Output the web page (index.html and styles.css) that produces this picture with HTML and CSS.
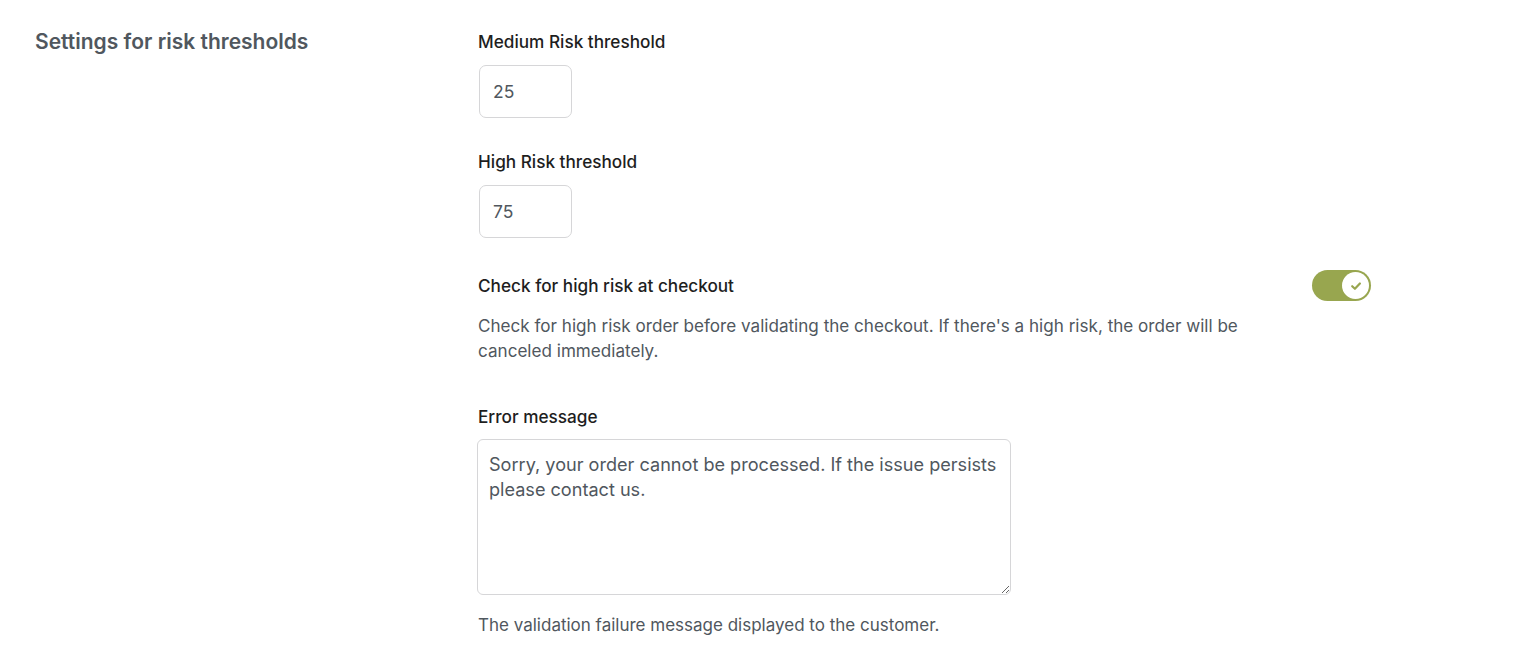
FILE: index.html
```html
<!DOCTYPE html>
<html lang="en">
<head>
<meta charset="utf-8">
<title>Settings for risk thresholds</title>
<link rel="stylesheet" href="styles.css">
</head>
<body>
<div class="section">
  <div class="section-title">
    <h2>Settings for risk thresholds</h2>
  </div>
  <div class="section-body">
    <div class="field">
      <label class="field-label" for="medium">Medium Risk threshold</label>
      <input class="num-input" id="medium" type="text" value="25">
    </div>
    <div class="field field-gap">
      <label class="field-label" for="high">High Risk threshold</label>
      <input class="num-input" id="high" type="text" value="75">
    </div>
    <div class="field toggle-field">
      <div class="toggle-row">
        <span class="field-label">Check for high risk at checkout</span>
        <span class="toggle">
          <span class="knob">
            <svg width="14" height="14" viewBox="0 0 14 14"><path d="M3.2 7.2 L5.9 9.8 L10.9 4.5" fill="none" stroke="#98a64f" stroke-width="2.2" stroke-linecap="round" stroke-linejoin="round"/></svg>
          </span>
        </span>
      </div>
      <p class="desc">Check for high risk order before validating the checkout. If there's a high risk, the order will be canceled immediately.</p>
    </div>
    <div class="field error-field">
      <label class="field-label" for="msg">Error message</label>
      <textarea class="msg-input" id="msg">Sorry, your order cannot be processed. If the issue persists please contact us.</textarea>
      <p class="help">The validation failure message displayed to the customer.</p>
    </div>
  </div>
</div>
</body>
</html>
```
FILE: styles.css
```css
html, body {
  margin: 0;
  padding: 0;
  background: #ffffff;
}
body {
  font-family: Inter, "Noto Sans", "Liberation Sans", sans-serif;
  color: #1e1e1e;
}
.section {
  display: flex;
  padding: 30px 0 0 35px;
}
.section-title {
  width: 443px;
  flex: none;
}
.section-title h2 {
  margin: 0;
  font-size: 21px;
  line-height: 24px;
  font-weight: 600;
  color: #50575e;
}
.section-body {
  width: 893px;
  display: flex;
  flex-direction: column;
}
.field {
  display: flex;
  flex-direction: column;
  align-items: flex-start;
}
.field-gap {
  margin-top: 32px;
}
.field-label {
  font-size: 17.2px;
  line-height: 24px;
  font-weight: 500;
  color: #1e1e1e;
}
.num-input {
  margin: 11px 0 0 1px;
  box-sizing: border-box;
  width: 93px;
  height: 53px;
  border: 1px solid #d6d6d8;
  border-radius: 7px;
  padding: 0 13px;
  font-family: inherit;
  font-size: 17.5px;
  color: #50575e;
  background: #fff;
  outline: none;
}
.toggle-field {
  margin-top: 32px;
  align-items: stretch;
}
.toggle-row {
  display: flex;
  align-items: center;
  justify-content: space-between;
}
.toggle {
  width: 59px;
  height: 31px;
  border-radius: 16px;
  background: #98a64f;
  display: flex;
  align-items: center;
  justify-content: flex-end;
  padding-right: 2px;
  box-sizing: border-box;
}
.knob {
  width: 27px;
  height: 27px;
  border-radius: 50%;
  background: #ffffff;
  display: flex;
  align-items: center;
  justify-content: center;
}
.desc {
  margin: 12px 0 0;
  max-width: 790px;
  font-size: 17.1px;
  line-height: 25px;
  color: #50575e;
}
.error-field {
  margin-top: 42px;
}
.msg-input {
  margin: 10px 0 0 -1px;
  box-sizing: border-box;
  width: 534px;
  height: 156px;
  border: 1px solid #d6d6d8;
  border-radius: 6px;
  padding: 12px 11px;
  font-family: inherit;
  font-size: 18.1px;
  line-height: 25px;
  color: #50575e;
  background: #fff;
  resize: both;
  outline: none;
}
.help {
  margin: 18px 0 0;
  font-size: 17px;
  line-height: 24px;
  color: #50575e;
}
```
